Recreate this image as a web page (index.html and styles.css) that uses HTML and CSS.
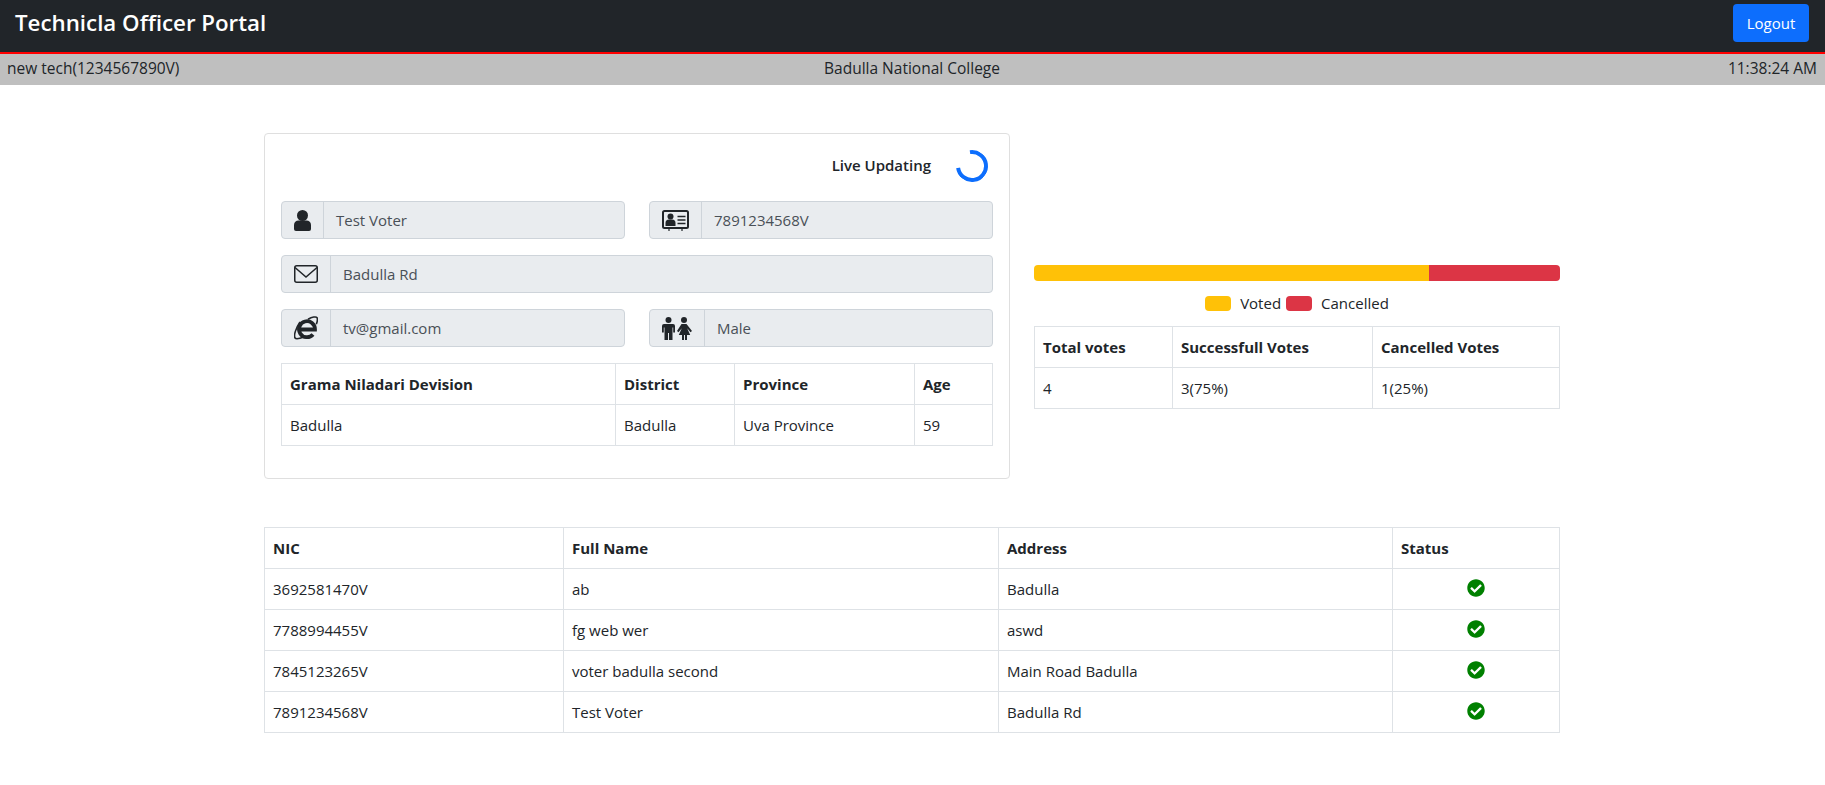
FILE: index.html
```html
<!DOCTYPE html>
<html lang="en">
<head>
  <meta charset="UTF-8" />
  <title>Technicla Officer Portal</title>
  <link rel="stylesheet" href="styles.css">
</head>
<body>
  <nav class="navbar">
    <span class="brand">Technicla Officer Portal</span>
    <button class="btn-logout">Logout</button>
  </nav>
  <div class="infobar">
    <span>new tech(1234567890V)</span>
    <span class="infobar-center">Badulla National College</span>
    <span class="infobar-right">11:38:24 AM</span>
  </div>

  <div class="container">
    <div class="top-row">
      <section class="card">
        <div class="live-row">
          <span class="live-label">Live Updating</span>
          <span class="spinner"></span>
        </div>
        <div class="fields">
          <div class="input-group">
            <span class="input-icon">
              <svg width="17" height="21" viewBox="0 0 17 21"><circle cx="8.5" cy="5.5" r="5.5" fill="#212529"/><path d="M0 15C0 12 2 10.500 4.500 10.500h8c2.500 0 4.500 1.500 4.500 4.500v4a2 2 0 0 1-2 2H2a2 2 0 0 1-2-2z" fill="#212529"/></svg>
            </span>
            <span class="input-value">Test Voter</span>
          </div>
          <div class="input-group">
            <span class="input-icon">
              <svg width="27" height="21" viewBox="0 0 27 21"><rect x="1" y="1" width="25" height="17" rx="1.500" fill="none" stroke="#212529" stroke-width="2"/><circle cx="8.500" cy="6.500" r="3" fill="#212529"/><path d="M3.500 16v-3a3.500 3.500 0 0 1 3.500-3.500h3a3.500 3.500 0 0 1 3.500 3.500v3z" fill="#212529"/><path d="M15.500 6.500h8M15.500 10h8M15.500 13.500h8" stroke="#212529" stroke-width="1.500"/><path d="M7 18v3M20 18v3" stroke="#212529" stroke-width="1.200"/></svg>
            </span>
            <span class="input-value">7891234568V</span>
          </div>
          <div class="input-group span-2">
            <span class="input-icon">
              <svg width="24" height="18" viewBox="0 0 24 18" fill="none" stroke="#212529" stroke-width="1.500"><rect x="0.750" y="0.750" width="22.500" height="16.500" rx="2"/><path d="M1 2.500l11 9.500 11-9.500"/></svg>
            </span>
            <span class="input-value">Badulla Rd</span>
          </div>
          <div class="input-group">
            <span class="input-icon">
              <svg width="24" height="24" viewBox="0 0 24 24" fill="none" stroke="#212529"><path d="M5 13.500H21A8 8 0 1 0 19 18.500" stroke-width="3.800"/><path d="M14 3.200c4-2.200 8.200-3 9-1.500.700 1.300.300 4-.700 6.500M6 6C2 12-.500 19 1 22c1 1.500 5 .500 9-1" stroke-width="1.600"/></svg>
            </span>
            <span class="input-value">tv@gmail.com</span>
          </div>
          <div class="input-group">
            <span class="input-icon">
              <svg width="30" height="23" viewBox="0 0 30 23" fill="#212529"><circle cx="6.500" cy="3" r="3"/><path d="M2 7h9a2 2 0 0 1 2 2v6.500h-1.800V10.500h-.7V23H7v-7H6v7H2.500V10.500h-.7v5H0V9a2 2 0 0 1 2-2z"/><circle cx="22" cy="3" r="3"/><path d="M19.500 7h5l5.500 7-1.500 1.200-3.300-4 3 6.800h-3.200v5h-2v-5h-1v5h-2v-5h-3.200l3-6.800-3.300 4-1.500-1.200z"/></svg>
            </span>
            <span class="input-value">Male</span>
          </div>
        </div>
        <table class="table voter-table">
          <tr>
            <th class="w-gn">Grama Niladari Devision</th>
            <th class="w-district">District</th>
            <th class="w-province">Province</th>
            <th>Age</th>
          </tr>
          <tr>
            <td>Badulla</td>
            <td>Badulla</td>
            <td>Uva Province</td>
            <td>59</td>
          </tr>
        </table>
      </section>

      <section class="stats">
        <div class="progress">
          <div class="progress-voted"></div>
          <div class="progress-cancelled"></div>
        </div>
        <div class="legend">
          <span class="swatch swatch-voted"></span>
          <span class="legend-text">Voted</span>
          <span class="swatch swatch-cancelled"></span>
          <span class="legend-text">Cancelled</span>
        </div>
        <table class="table">
          <tr>
            <th class="w-total">Total votes</th>
            <th class="w-success">Successfull Votes</th>
            <th>Cancelled Votes</th>
          </tr>
          <tr>
            <td>4</td>
            <td>3(75%)</td>
            <td>1(25%)</td>
          </tr>
        </table>
      </section>
    </div>

    <table class="table list-table">
      <tr>
        <th class="w-nic">NIC</th>
        <th class="w-name">Full Name</th>
        <th class="w-address">Address</th>
        <th>Status</th>
      </tr>
      <tr>
        <td>3692581470V</td>
        <td>ab</td>
        <td>Badulla</td>
        <td class="status"><svg class="check" viewBox="0 0 512 512"><path d="M504 256c0 136.967-111.033 248-248 248S8 392.967 8 256 119.033 8 256 8s248 111.033 248 248zM227.314 387.314l184-184c6.248-6.248 6.248-16.379 0-22.627l-22.627-22.627c-6.248-6.249-16.379-6.249-22.628 0L216 308.118l-70.059-70.059c-6.248-6.248-16.379-6.248-22.628 0l-22.627 22.627c-6.248 6.248-6.248 16.379 0 22.627l104 104c6.249 6.249 16.379 6.249 22.628.001z"/></svg></td>
      </tr>
      <tr>
        <td>7788994455V</td>
        <td>fg web wer</td>
        <td>aswd</td>
        <td class="status"><svg class="check" viewBox="0 0 512 512"><path d="M504 256c0 136.967-111.033 248-248 248S8 392.967 8 256 119.033 8 256 8s248 111.033 248 248zM227.314 387.314l184-184c6.248-6.248 6.248-16.379 0-22.627l-22.627-22.627c-6.248-6.249-16.379-6.249-22.628 0L216 308.118l-70.059-70.059c-6.248-6.248-16.379-6.248-22.628 0l-22.627 22.627c-6.248 6.248-6.248 16.379 0 22.627l104 104c6.249 6.249 16.379 6.249 22.628.001z"/></svg></td>
      </tr>
      <tr>
        <td>7845123265V</td>
        <td>voter badulla second</td>
        <td>Main Road Badulla</td>
        <td class="status"><svg class="check" viewBox="0 0 512 512"><path d="M504 256c0 136.967-111.033 248-248 248S8 392.967 8 256 119.033 8 256 8s248 111.033 248 248zM227.314 387.314l184-184c6.248-6.248 6.248-16.379 0-22.627l-22.627-22.627c-6.248-6.249-16.379-6.249-22.628 0L216 308.118l-70.059-70.059c-6.248-6.248-16.379-6.248-22.628 0l-22.627 22.627c-6.248 6.248-6.248 16.379 0 22.627l104 104c6.249 6.249 16.379 6.249 22.628.001z"/></svg></td>
      </tr>
      <tr>
        <td>7891234568V</td>
        <td>Test Voter</td>
        <td>Badulla Rd</td>
        <td class="status"><svg class="check" viewBox="0 0 512 512"><path d="M504 256c0 136.967-111.033 248-248 248S8 392.967 8 256 119.033 8 256 8s248 111.033 248 248zM227.314 387.314l184-184c6.248-6.248 6.248-16.379 0-22.627l-22.627-22.627c-6.248-6.249-16.379-6.249-22.628 0L216 308.118l-70.059-70.059c-6.248-6.248-16.379-6.248-22.628 0l-22.627 22.627c-6.248 6.248-6.248 16.379 0 22.627l104 104c6.249 6.249 16.379 6.249 22.628.001z"/></svg></td>
      </tr>
    </table>
  </div>
</body>
</html>
```

FILE: styles.css
```css
* {
  box-sizing: border-box;
}
body {
  margin: 0;
  background-color: #fff;
  font-family: "Open Sans", "Noto Sans", sans-serif;
  font-size: 15px;
  line-height: 24px;
  color: #212529;
}
.navbar {
  display: flex;
  justify-content: space-between;
  align-items: flex-start;
  height: 54px;
  padding: 4px 16px 0 15px;
  background-color: #212529;
  border-bottom: 2px solid #f00;
}
.brand {
  color: #fff;
  font-size: 22.3px;
  font-weight: 600;
  line-height: 38px;
}
.btn-logout {
  height: 38px;
  width: 76px;
  padding: 0;
  background-color: #0d6efd;
  color: #fff;
  border: none;
  border-radius: 4px;
  font-family: inherit;
  font-size: 15px;
}
.infobar {
  display: grid;
  grid-template-columns: 1fr 1fr 1fr;
  height: 31px;
  padding: 2px 8px 0 7px;
  background-color: #bfbfbf;
  font-weight: 500;
  font-size: 15.5px;
}
.infobar-center {
  text-align: center;
}
.infobar-right {
  text-align: right;
}
.container {
  width: 1296px;
  margin-left: 264px;
  padding-top: 48px;
}
.top-row {
  display: flex;
  gap: 24px;
  margin-bottom: 48px;
}
.card {
  width: 746px;
  padding: 16px;
  border: 1px solid #dfdfdf;
  border-radius: 4px;
}
.live-row {
  display: flex;
  justify-content: flex-end;
  align-items: center;
  gap: 25px;
  height: 32px;
  margin-bottom: 19px;
  padding-right: 5px;
}
.live-label {
  margin-bottom: 3px;
  font-weight: 600;
  font-size: 15px;
}
.spinner {
  width: 32px;
  height: 32px;
  border: 4px solid #0d6efd;
  border-right-color: transparent;
  border-radius: 50%;
  transform: rotate(217deg);
}
.fields {
  display: grid;
  grid-template-columns: 344px 344px;
  gap: 16px 24px;
  margin-bottom: 16px;
}
.span-2 {
  grid-column: span 2;
}
.input-group {
  display: flex;
  height: 38px;
  background-color: #e9ecef;
  border: 1px solid #ced4da;
  border-radius: 4px;
  color: #495057;
}
.input-icon {
  display: flex;
  align-items: center;
  padding: 0 12px;
  border-right: 1px solid #ced4da;
}
.input-value {
  padding: 6px 12px;
}
.table {
  width: 100%;
  table-layout: fixed;
  border-collapse: collapse;
}
.table th, .table td {
  height: 41px;
  padding: 8px;
  border: 1px solid #dee2e6;
  text-align: left;
  font-size: 15px;
}
.table th {
  font-weight: 700;
}
.voter-table {
  margin-bottom: 16px;
}
.w-gn { width: 334px; }
.w-district { width: 119px; }
.w-province { width: 180px; }
.w-total { width: 138px; }
.w-success { width: 200px; }
.w-nic { width: 299px; }
.w-name { width: 435px; }
.w-address { width: 394px; }
.stats {
  width: 526px;
  padding-top: 132px;
}
.progress {
  display: flex;
  height: 16px;
  border-radius: 4px;
  overflow: hidden;
}
.progress-voted {
  width: 75%;
  background-color: #ffc107;
}
.progress-cancelled {
  width: 25%;
  background-color: #dc3545;
}
.legend {
  display: flex;
  justify-content: center;
  align-items: center;
  height: 28px;
  margin: 8px 0 9px;
  padding-left: 5px;
}
.swatch {
  width: 26px;
  height: 15px;
  border-radius: 4px;
}
.swatch-voted {
  background-color: #ffc107;
}
.swatch-cancelled {
  background-color: #dc3545;
}
.legend-text {
  margin: 0 5px 0 9px;
}
.status {
  text-align: center !important;
}
.check {
  display: block;
  width: 18px;
  height: 18px;
  margin: -2px auto 0;
  fill: #008000;
}
```
